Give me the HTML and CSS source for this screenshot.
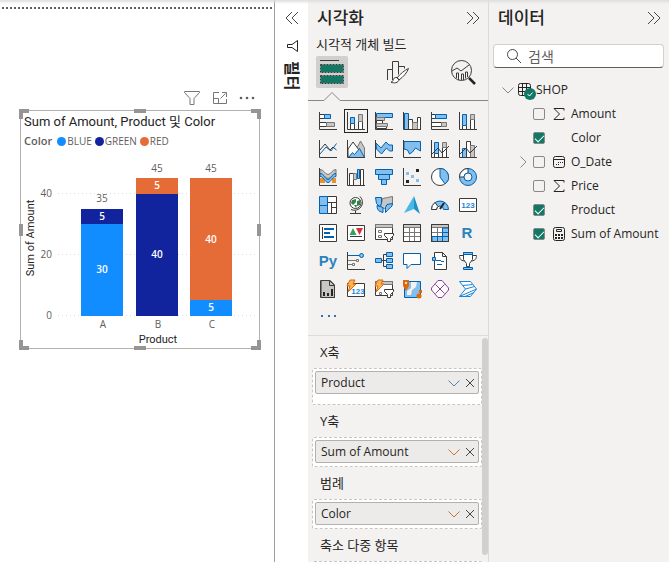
FILE: index.html
```html
<!DOCTYPE html>
<html lang="ko">
<head>
    <meta charset="UTF-8">
    <meta name="viewport" content="width=device-width, initial-scale=1.0">
    <title>시각화</title>
    <link rel="stylesheet" href="styles.css">
</head>
<body>
    <!-- Report canvas -->
    <main class="canvas">
        <div class="page-edge"></div>
        <section class="visual">
            <div class="visual-tools">
                <button aria-label="필터"><svg width="18" height="16" viewBox="0 0 18 16"><path d="M1.500 1.500h15v1L11 8.500v6H7v-6L1.500 2.500z"/></svg></button>
                <button aria-label="포커스 모드"><svg width="16" height="14" viewBox="0 0 16 14"><path d="M7 1.500H1.500v11h13V8M1.500 7.500h5v5M8.500 7.500l5-5M10 1.500h4.500V6"/></svg></button>
                <button aria-label="추가 옵션"><svg width="16" height="4" viewBox="0 0 16 4"><g class="dots"><circle cx="2" cy="2" r="1.300"/><circle cx="8" cy="2" r="1.300"/><circle cx="14" cy="2" r="1.300"/></g></svg></button>
            </div>
            <div class="frame">
                <h3>Sum of Amount, Product 및 Color</h3>
                <div class="legend">
                    <b>Color</b>
                    <span class="key blue">BLUE</span>
                    <span class="key green">GREEN</span>
                    <span class="key red">RED</span>
                </div>
                <svg class="chart" viewBox="0 0 238 197">
                    <path class="grid-line" d="M37 42.500h198M37 103.500h198M37 164.500h198"/>
                    <g class="bar-blue">
                        <rect x="60" y="73" width="42" height="92"/>
                        <rect x="169" y="149" width="42" height="16"/>
                    </g>
                    <g class="bar-green">
                        <rect x="60" y="58" width="42" height="15"/>
                        <rect x="115" y="43" width="42" height="122"/>
                    </g>
                    <g class="bar-red">
                        <rect x="115" y="27" width="42" height="16"/>
                        <rect x="169" y="27" width="42" height="122"/>
                    </g>
                    <g class="tick end">
                        <text x="31" y="46">40</text>
                        <text x="31" y="107">20</text>
                        <text x="31" y="168">0</text>
                    </g>
                    <g class="tick">
                        <text x="81" y="51">35</text>
                        <text x="136" y="21">45</text>
                        <text x="190" y="21">45</text>
                        <text x="82" y="177">A</text>
                        <text x="137" y="177">B</text>
                        <text x="191" y="177">C</text>
                    </g>
                    <g class="value">
                        <text x="81" y="69">5</text>
                        <text x="81" y="122">30</text>
                        <text x="136" y="38">5</text>
                        <text x="136" y="107">40</text>
                        <text x="190" y="92">40</text>
                        <text x="190" y="160">5</text>
                    </g>
                    <g class="axis-title">
                        <text x="137" y="192">Product</text>
                        <text x="-87" y="13" transform="rotate(-90)">Sum of Amount</text>
                    </g>
                </svg>
                <i class="handle tl"></i><i class="handle tc"></i><i class="handle tr"></i>
                <i class="handle ml"></i><i class="handle mr"></i>
                <i class="handle bl-corner"></i><i class="handle bc"></i><i class="handle br"></i>
            </div>
        </section>
    </main>

    <!-- Collapsed filter pane -->
    <aside class="filters">
        <button aria-label="확장"><svg width="14" height="14" viewBox="0 0 14 14"><path d="M7 1L1 7l6 6M13 1L7 7l6 6"/></svg></button>
        <svg class="funnel" width="12" height="12" viewBox="0 0 12 12"><path d="M11.500.5v11L6 7.500H1.500v-3H6z"/></svg>
        <h2>필터</h2>
    </aside>

    <!-- Visualizations pane -->
    <aside class="pane build">
        <header>
            <h2>시각화</h2>
            <button aria-label="축소"><svg width="14" height="14" viewBox="0 0 14 14"><path d="M1 1l6 6-6 6M7 1l6 6-6 6"/></svg></button>
        </header>
        <h3>시각적 개체 빌드</h3>
        <nav class="tabs">
            <button class="on" aria-label="빌드"><svg width="24" height="24" viewBox="0 0 24 24"><path class="k" d="M0 .5h19"/><path class="n" fill="#117865" d="M1 5h22v7H1zM1 16h22v7H1z"/><path class="k" stroke-dasharray="2 1" d="M.5 4.500h23v8H.5zM.5 15.500h23v8H.5z"/></svg></button>
            <button aria-label="서식"><svg width="24" height="24" viewBox="0 0 24 24"><path class="k" d="M1.500 20V9.500h5V20M6.500 9.500v-8h6v13M12.500 6.500h6v2"/><path class="w" d="M22.500 8.500C19 10 14 14 11 18l2 2c4-3 8-7 9.500-11.500zM11 17.500c-3-.5-3.500 1.500-4 3-.3 1-1 1.500-2 1.700 3 1.300 7.500.8 8-2.700z"/></svg></button>
            <button aria-label="분석"><svg width="24" height="24" viewBox="0 0 24 24"><circle class="k" cx="10.500" cy="10.500" r="10"/><path stroke="#252423" stroke-width="2.500" d="M18 18l6 6"/><path class="k" d="M1 11l5-3 4 3 8-6M5.500 18v-5h2v7M10.500 20v-6h2v6M14.500 18.500V12h2v5"/></svg></button>
        </nav>
        <svg class="notch" viewBox="0 0 180 10" preserveAspectRatio="xMinYMin slice"><path d="M0 9.500h16l8-8 8 8H400"/></svg>

        <div class="gallery">
            <button aria-label="누적 가로 막대형"><svg viewBox="0 0 18 18"><path class="k" d="M.5 0v17.500H18"/><path class="w" d="M.5 2.500h5v4h-5zM.5 10.500h7v4h-7z"/><path class="b" d="M5.500 2.500h6v4h-6z"/><path class="g" d="M7.500 10.500h8v4h-8z"/></svg></button>
            <button class="on" aria-label="누적 세로 막대형"><svg viewBox="0 0 18 18"><path class="k" d="M.5 0v17.500H18"/><path class="w" d="M3.500 11.500h4v6h-4zM11.500 9.500h4v8h-4z"/><path class="b" d="M3.500 5.500h4v6h-4z"/><path class="g" d="M11.500 2.500h4v7h-4z"/></svg></button>
            <button aria-label="묶은 가로 막대형"><svg viewBox="0 0 18 18"><path class="b" d="M1.500 1.500h16v4h-16z"/><path class="g" d="M1.500 5.500h8v3h-8z"/><path class="w" d="M1.500 8.500h6v3h-6zM1.500 14.500h10v2h-10z"/><path class="g" d="M1.500 11.500h11v3h-11z"/><path class="k" d="M.5 0v17.500H18"/></svg></button>
            <button aria-label="묶은 세로 막대형"><svg viewBox="0 0 18 18"><path class="b" d="M1.500 1.500h4v16h-4z"/><path class="w" d="M5.500 7.500h4v10h-4zM14.500 5.500h3v12h-3z"/><path class="g" d="M9.500 10.500h5v7h-5z"/><path class="k" d="M.5 0v17.500H18"/></svg></button>
            <button aria-label="100% 가로 막대형"><svg viewBox="0 0 18 18"><path class="k" d="M.5 0v17.500H18"/><path class="w" d="M.5 2.500h4v4h-4zM.5 10.500h10v4H.5z"/><path class="b" d="M4.500 2.500h11v4h-11z"/><path class="g" d="M10.500 10.500h5v4h-5z"/></svg></button>
            <button aria-label="100% 세로 막대형"><svg viewBox="0 0 18 18"><path class="k" d="M.5 0v17.500H18"/><path class="w" d="M3.500 13.500h4v4h-4zM11.500 7.500h4v10h-4z"/><path class="b" d="M3.500 2.500h4v11h-4z"/><path class="g" d="M11.500 2.500h4v5h-4z"/></svg></button>

            <button aria-label="꺾은선형"><svg viewBox="0 0 18 18"><path class="k" d="M.5 0v17.500H18"/><path class="bl" d="M1 14l6-7 5 4 5.500-7.500"/><path class="k" d="M1 10l5-6 5 6 3-3 3.500 3"/></svg></button>
            <button aria-label="영역형"><svg viewBox="0 0 18 18"><path class="g" d="M9 10l4.500-9 4 7v9z"/><path class="w" d="M1 9l5-7 6 8-5 7H1z"/><path class="b" d="M1.500 17.500l4-5 2 2 5-6 5 9z"/><path class="k" d="M.5 0v17.500H18"/></svg></button>
            <button aria-label="누적 영역형"><svg viewBox="0 0 18 18"><path class="b" d="M1 3l5 5 5-6 3 3h3.500v6h-3l-3-3-5 6-5-5z"/><path class="k" d="M.5 0v17.500H18"/></svg></button>
            <button aria-label="100% 누적 영역형"><svg viewBox="0 0 18 18"><path class="b" d="M1 1.500h16.500V11l-5-3-3 4-3 2-2-4L1 9z"/><path class="k" d="M.5 0v17.500H18"/></svg></button>
            <button aria-label="꺾은선형 및 누적 막대형"><svg viewBox="0 0 18 18"><path class="w" d="M3.500 13.500h4v4h-4zM11.500 7.500h4v10h-4z"/><path class="b" d="M3.500 2.500h4v11h-4z"/><path class="g" d="M11.500 2.500h4v5h-4z"/><path class="k" d="M.5 0v17.500H18M1 14l6-6 4 5 7-7"/></svg></button>
            <button aria-label="꺾은선형 및 묶은 막대형"><svg viewBox="0 0 18 18"><path class="b" d="M3.500 8.500h4v9h-4z"/><path class="w" d="M7.500 1.500h4v16h-4z"/><path class="g" d="M11.500 5.500h4v12h-4z"/><path class="k" d="M.5 0v17.500H18M1 14l6-6 4 5 7-7"/></svg></button>

            <button aria-label="리본"><svg viewBox="0 0 18 18"><path class="n" fill="#e8912d" d="M1 10h5v5H1zM13 10h4v5h-4z"/><path class="g" d="M1 1.500c4 0 5 5 8 5s4-5 8-5v4c-4 0-5 5-8 5s-4-5-8-5z"/><path class="b" d="M1 5.500c4 0 5 6 8 6s4-6 8-6v3c-4 0-5 6-8 6s-4-6-8-6z"/><path class="k" d="M.5 0v17.500H18"/></svg></button>
            <button aria-label="폭포"><svg viewBox="0 0 18 18"><path class="w" d="M2.500 5.500h4v12h-4zM13.500 1.500h3v16h-3z"/><path class="g" d="M6.500 5.500h3v6h-3z"/><path class="b" d="M10.500 1.500h2v9h-2z"/><path class="k" d="M.5 0v17.500H18"/></svg></button>
            <button aria-label="깔때기"><svg viewBox="0 0 18 18"><path class="b" d="M.5 1.500h17v5H.5zM3.500 6.500h11v5h-11zM6.500 11.500h5v5h-5z"/></svg></button>
            <button aria-label="분산형"><svg viewBox="0 0 18 18"><path class="k" d="M.5 0v17.500H18"/><path class="n" fill="#252423" d="M13 1h3v3h-3zM3 12h3v3H3z"/><path class="n" fill="#83beec" d="M3 4h3v3H3zM8 7h3v3H8zM13 11h3v3h-3z"/></svg></button>
            <button aria-label="원형"><svg viewBox="0 0 18 18"><circle class="w" cx="9" cy="9" r="8.500"/><path class="b" d="M9 .5a8.500 8.500 0 0 1 5 15.400L9 9z"/></svg></button>
            <button aria-label="도넛형"><svg viewBox="0 0 18 18"><circle class="b" cx="9" cy="9" r="8.500"/><path class="w" d="M9 .5A8.500 8.500 0 0 0 .5 9H5a4 4 0 0 1 4-4z"/><circle class="bl" cx="9" cy="9" r="4" fill="#f3f2f1"/></svg></button>

            <button aria-label="트리맵"><svg viewBox="0 0 18 18"><path class="w" d="M8.500.5h9v17h-9zM8.500 6.500h9M12.500 6.500v11M12.500 11.500h5"/><path class="b" d="M.5.5h8v17h-8zM.5 9.500h8"/></svg></button>
            <button aria-label="지도"><svg viewBox="0 0 18 18"><circle class="w" cx="8.500" cy="7" r="5.500"/><path class="n" fill="#31834c" d="M5 4l4-1 0 3-3 3-2-2zM10 5l3-1v5l-3 1zM7 9l3 0-1 3z"/><path class="k" d="M13 .5a8 8 0 0 1-9 13M8.500 15v2.500M3 17.500h11"/></svg></button>
            <button aria-label="등치 지역도"><svg viewBox="0 0 18 18"><path class="g" d="M7.500 2.500l5-1 5-1v8l-5 1-3 3-4-1 1-4z"/><path class="b" d="M.5 1.500h6v6l-2 3-3-3zM12 8.500l5.500-1c0 4-3 4-5 7l-2 2v-5zM2 9.500l6 2v5l-3-1c-2-1-3-3-3-6z"/></svg></button>
            <button aria-label="Azure 지도"><svg viewBox="0 0 18 18"><path class="n" fill="#48b8e8" d="M11 0L1 17l10-4z"/><path class="n" fill="#1f8fc4" d="M11 0l6 18-6-5z"/></svg></button>
            <button aria-label="계기"><svg viewBox="0 0 18 18"><path class="b" d="M.5 13.500a8.500 8.500 0 0 1 17 0h-5a3.500 3.500 0 0 0-7 0z"/><path class="w" d="M.5 13.500A8.500 8.500 0 0 1 4 6.500l3 4a4 4 0 0 0-1.500 3z"/><path stroke="#252423" stroke-width="2" d="M9 13l4-6"/></svg></button>
            <button aria-label="카드"><svg viewBox="0 0 18 18"><path class="w" d="M.5 2.500h17v13H.5z"/><text class="num" x="9" y="12">123</text></svg></button>

            <button aria-label="여러 행 카드"><svg viewBox="0 0 18 18"><path class="w" d="M.5.5h17v17H.5z"/><path class="k" d="M3.500 3v12"/><path stroke="#0063b1" stroke-width="2" d="M5 5h10M5 9h6M5 13h10"/></svg></button>
            <button aria-label="KPI"><svg viewBox="0 0 18 18"><path class="w" d="M.5 1.500h17v15H.5z"/><path class="k" d="M3 12.500h12"/><path class="n" fill="#31a354" d="M6 4l3.500 7h-7z"/><path class="n" fill="#d13438" d="M12.500 11L9 4h7z"/></svg></button>
            <button aria-label="슬라이서"><svg viewBox="0 0 18 18"><path class="w" d="M.5.5h17v15H.5z"/><path class="g" d="M.5.5h17v3H.5z"/><path class="gl" d="M3.500 6.500h3v2h-3zM3.500 11.500h3v2h-3z"/><path class="w" d="M9.500 9.500h9v2l-3 3v3h-3v-3l-3-3z"/></svg></button>
            <button aria-label="테이블"><svg viewBox="0 0 18 18"><path class="w" d="M.5.5h17v17H.5z"/><path class="g" d="M.5.5h17v3H.5z"/><path class="gl" d="M1 8.500h16M1 12.500h16M6.500 4v13M11.500 4v13"/><path class="k" d="M.5.5h17v17H.5z"/></svg></button>
            <button aria-label="행렬"><svg viewBox="0 0 18 18"><path class="w" d="M.5.5h17v17H.5z"/><path class="g" d="M.5.5h17v3H.5z"/><path class="gl" d="M1 8.500h16M6.500 4v13"/><path class="b" d="M11.500 4h6v13.500H1v-5h10.500zM11.500 12.500h6M6.500 12.500v5M11.500 8.500h6M11.500 12v5"/><path class="k" d="M.5.5h17v17H.5z"/></svg></button>
            <button aria-label="R 스크립트"><svg viewBox="0 0 18 18"><text class="script" x="8" y="14">R</text></svg></button>

            <button aria-label="Python"><svg viewBox="0 0 18 18"><text class="script" x="9" y="14">Py</text></svg></button>
            <button aria-label="주요 영향 요인"><svg viewBox="0 0 18 18"><path class="k" d="M.5 0v17.500H18"/><path class="bl" d="M1 3.500h11"/><path class="gl" d="M1 8.500h8M1 12.500h4M9.500 7.500h2v2h-2zM5.500 11.500h2v2h-2z"/><circle class="b" cx="14.500" cy="3.500" r="2"/></svg></button>
            <button aria-label="분해 트리"><svg viewBox="0 0 18 18"><path class="k" d="M6 8.500h6M8.500 2.500v12M8.500 2.500H12M8.500 14.500H12"/><path class="b" d="M.5 6.500h6v4h-6zM11.500.5h6v4h-6zM11.500 6.500h6v4h-6zM11.500 12.500h6v4h-6z"/></svg></button>
            <button aria-label="질문 및 답변"><svg viewBox="0 0 18 18"><path fill="#fff" stroke="#0063b1" d="M.5 1.500h17v11H8l-4 4v-4H.5z"/></svg></button>
            <button aria-label="설명"><svg viewBox="0 0 18 18"><path class="w" d="M3.500.5h8l4 4v13h-12zM11.500.5v4h4"/><path class="bl" d="M5 8.500h5M10 9.500h3M6 12.500h5"/><path class="b" d="M1.500 5.500h3v3h-3z"/></svg></button>
            <button aria-label="목표"><svg viewBox="0 0 18 18"><path class="w" d="M4.500.5h9v7l-3 4v3h-3v-3l-3-4zM4.500 3.500h-4c0 3 1 5 5 5.500M13.500 3.500h4c0 3-1 5-5 5.500"/><path class="b" d="M4.500.5h9v2h-9zM4.500 15.500h9v2h-9z"/></svg></button>

            <button aria-label="페이지를 매긴 보고서"><svg viewBox="0 0 18 18"><path class="g" d="M2.500.5h9l4 4v13h-13z"/><path class="k" d="M1.500.5h9l5 5v12h-14zM10.500.5v5h5"/><path stroke="#252423" stroke-width="2" d="M5 16v-4M9 16v-3M13 16V9"/></svg></button>
            <button aria-label="카드(신규)"><svg viewBox="0 0 18 18"><path class="w" d="M.5 3.500h17v13H.5z"/><text class="num" x="11" y="14">123</text><path class="bolt" d="M3 0h5L6 4h3l-8 8 2-6H0z"/></svg></button>
            <button aria-label="슬라이서(신규)"><svg viewBox="0 0 18 18"><path class="w" d="M.5 1.500h17v14H.5z"/><path class="g" d="M.5 1.500h17v3H.5z"/><path class="gl" d="M4.500 12.500h2v2h-2z"/><path class="w" d="M9.500 9.500h9v2l-3 3v3h-3v-3l-3-3z"/><path class="bolt" d="M3 0h5L6 4h3l-8 8 2-6H0z"/></svg></button>
            <button aria-label="ArcGIS"><svg viewBox="0 0 18 18"><path class="b" d="M1.500 1.500h16v16h-16z"/><path class="n" fill="#f3f2f1" d="M8 2h6l-1 5-4 3-1 5H4v-4l4-3z"/><path class="n" fill="#d96b0c" d="M0 0h6v6l-3 5-3-5zM16 10h3v3h-3z"/><circle class="n" cx="16" cy="16" r="2.500" fill="#d96b0c"/><circle class="n" cx="3" cy="3" r="1" fill="#fff"/></svg></button>
            <button aria-label="Power Apps"><svg viewBox="0 0 18 18"><path fill="#fff" stroke="#8c3b9c" d="M7 .5h4L17.500 8v2L11 17.500H7L.5 10V8zM4.500 4.500l9 9M13.500 4.500l-9 9M9 9"/></svg></button>
            <button aria-label="Power Automate"><svg viewBox="0 0 18 18"><path fill="#fff" stroke="#1a86d9" d="M.5 1.500h11L17.500 9l-6 7.500H.5L6.500 9zM4 5.500l9.500-1M6.500 9l9-2.500M.5 16.500L17.500 9M6 16.500l9-4"/></svg></button>

            <button class="more" aria-label="시각적 개체 더 보기"><svg viewBox="0 0 18 18"><path d="M2 7h2v2H2zM9 7h2v2H9zM15 7h2v2h-2z"/></svg></button>
        </div>

        <!-- Field wells -->
        <div class="wells">
            <h4>X축</h4>
            <div class="well tall">
                <div class="pill">Product
                    <button aria-label="메뉴"><svg width="12" height="12" viewBox="0 0 12 12"><path class="cool" d="M.5 3.500L6 9l5.500-5.500"/></svg></button>
                    <button aria-label="제거"><svg width="10" height="12" viewBox="0 0 10 12"><path d="M1 2l8 8M9 2l-8 8"/></svg></button>
                </div>
            </div>
            <h4>Y축</h4>
            <div class="well">
                <div class="pill">Sum of Amount
                    <button aria-label="메뉴"><svg width="12" height="12" viewBox="0 0 12 12"><path class="warm" d="M.5 3.500L6 9l5.500-5.500"/></svg></button>
                    <button aria-label="제거"><svg width="10" height="12" viewBox="0 0 10 12"><path d="M1 2l8 8M9 2l-8 8"/></svg></button>
                </div>
            </div>
            <h4>범례</h4>
            <div class="well">
                <div class="pill">Color
                    <button aria-label="메뉴"><svg width="12" height="12" viewBox="0 0 12 12"><path class="warm" d="M.5 3.500L6 9l5.500-5.500"/></svg></button>
                    <button aria-label="제거"><svg width="10" height="12" viewBox="0 0 10 12"><path d="M1 2l8 8M9 2l-8 8"/></svg></button>
                </div>
            </div>
            <h4>축소 다중 항목</h4>
            <div class="well"></div>
            <i class="scrollbar"></i>
        </div>
    </aside>

    <!-- Data pane -->
    <aside class="pane data">
        <header>
            <h2>데이터</h2>
            <button aria-label="축소"><svg width="14" height="14" viewBox="0 0 14 14"><path d="M1 1l6 6-6 6M7 1l6 6-6 6"/></svg></button>
        </header>
        <label class="search">
            <svg width="16" height="16" viewBox="0 0 16 16"><circle cx="6.500" cy="6.500" r="5"/><path d="M10 10l5 5"/></svg>
            <input type="text" placeholder="검색" aria-label="검색">
        </label>
        <div class="table-row">
            <button aria-label="접기"><svg width="12" height="12" viewBox="0 0 12 12"><path d="M.5 3.500L6 9l5.500-5.500"/></svg></button>
            <span class="table-icon">
                <svg width="14" height="14" viewBox="0 0 14 14"><rect x=".5" y=".5" width="12" height="12" rx="2"/><path d="M.5 4.500h12M.5 8.500h12M4.500.5v12M8.500.5v12"/></svg>
                <svg class="badge" width="12" height="12" viewBox="0 0 12 12"><circle cx="6" cy="6" r="6"/><path d="M3.500 6l2 2 3-3.500"/></svg>
            </span>
            SHOP
        </div>
        <ul class="fields">
            <li>
                <input type="checkbox" id="f-amount">
                <svg viewBox="0 0 12 14"><path d="M11 3.500v-2H1L6.500 7 1 12.500h10v-2"/></svg>
                <label for="f-amount">Amount</label>
            </li>
            <li>
                <input type="checkbox" id="f-color" checked>
                <svg viewBox="0 0 12 14"></svg>
                <label for="f-color">Color</label>
            </li>
            <li>
                <button aria-label="펼치기"><svg viewBox="0 0 12 12"><path d="M3.500.5L9 6l-5.500 5.500"/></svg></button>
                <input type="checkbox" id="f-date">
                <svg viewBox="0 0 12 14"><rect x=".5" y="1.500" width="11" height="11" rx="2"/><path d="M.5 4.500h11"/><path stroke-dasharray="1 1" d="M5 7.500h5M3 9.500h4"/></svg>
                <label for="f-date">O_Date</label>
            </li>
            <li>
                <input type="checkbox" id="f-price">
                <svg viewBox="0 0 12 14"><path d="M11 3.500v-2H1L6.500 7 1 12.500h10v-2"/></svg>
                <label for="f-price">Price</label>
            </li>
            <li>
                <input type="checkbox" id="f-product" checked>
                <svg viewBox="0 0 12 14"></svg>
                <label for="f-product">Product</label>
            </li>
            <li>
                <input type="checkbox" id="f-sum" checked>
                <svg viewBox="0 0 12 14"><rect x=".5" y=".5" width="11" height="13" rx="2"/><path d="M3.500 2.500h5v2h-5z"/><path stroke-width="2" stroke-dasharray="2 1" d="M2 8h8M2 11h8"/></svg>
                <label for="f-sum">Sum of Amount</label>
            </li>
        </ul>
    </aside>
</body>
</html>
```
FILE: styles.css
```css
* {
    box-sizing: border-box;
    margin: 0;
    padding: 0;
}

body {
    display: flex;
    height: 100vh;
    overflow: hidden;
    background: #fff;
    color: #252423;
    font-family: "Open Sans", "Noto Sans CJK KR", sans-serif;
    font-size: 12px;
    line-height: 16px;
}

body::before {
    content: "";
    position: absolute;
    width: 100%;
    height: 4px;
    background: linear-gradient(#dedede, transparent);
}

button {
    display: flex;
    align-items: center;
    justify-content: center;
    border: none;
    background: none;
    cursor: pointer;
}

svg {
    display: block;
    flex: none;
    fill: none;
    stroke: #484644;
    overflow: visible;
}

/* Canvas */
.canvas {
    flex: 1;
    min-width: 0;
    padding-top: 7px;
}

.page-edge {
    height: 2px;
    margin: 0 1px 0 2px;
    background: repeating-linear-gradient(90deg, #605e5c 0 2px, transparent 2px 4px);
}

.visual {
    margin: 80px 14px 0 20px;
}

.visual-tools {
    display: flex;
    align-items: center;
    justify-content: flex-end;
    gap: 11px;
    height: 21px;
    padding: 0 5px 3px 0;
}

.visual-tools svg {
    stroke: #797775;
}

.visual-tools .dots {
    fill: #605e5c;
    stroke: none;
}

.frame {
    position: relative;
    border: 1px solid #b3b0ad;
}

.frame h3 {
    padding: 2px 0 0 3px;
    font: 13px/18px Roboto, "Noto Sans CJK KR", sans-serif;
    white-space: nowrap;
}

.legend {
    display: flex;
    gap: 3px;
    height: 20px;
    padding-left: 3px;
    color: #605e5c;
    font-size: 11px;
    line-height: 20px;
}

.legend b {
    margin-right: 2px;
    font-weight: 600;
}

.key {
    display: flex;
    align-items: center;
    gap: 1px;
    font-size: 10px;
}

.key::before {
    content: "";
    width: 9px;
    height: 9px;
    border-radius: 50%;
    background: currentColor;
}

.key.blue::before { background: #118dff; }
.key.green::before { background: #12239e; }
.key.red::before { background: #e66c37; }

.chart {
    width: 100%;
    stroke: none;
    text-anchor: middle;
    font-size: 10px;
}

.grid-line {
    stroke: #dddbd9;
    stroke-dasharray: 1 3;
}

.bar-blue { fill: #118dff; }
.bar-green { fill: #12239e; }
.bar-red { fill: #e66c37; }
.tick { fill: #605e5c; }
.tick.end { text-anchor: end; }
.value { fill: #fff; font-weight: 600; }

.axis-title {
    fill: #252423;
    font-family: Roboto, sans-serif;
    font-size: 11px;
}

.handle {
    position: absolute;
    border: 0 solid #979593;
}

.tl, .tr, .bl-corner, .br { width: 10px; height: 10px; }
.tl, .tc, .tr { top: -2px; }
.bl-corner, .bc, .br { bottom: -2px; }
.tl, .ml, .bl-corner { left: -2px; }
.tr, .mr, .br { right: -2px; }
.tl { border-width: 4px 0 0 4px; }
.tr { border-width: 4px 4px 0 0; }
.bl-corner { border-width: 0 0 4px 4px; }
.br { border-width: 0 4px 4px 0; }

.tc, .bc {
    left: calc(50% - 6px);
    width: 12px;
    border-width: 4px 0 0;
}

.ml, .mr {
    top: calc(50% - 6px);
    height: 12px;
    border-width: 0 0 0 4px;
}

/* Filters */
.filters {
    display: flex;
    flex-direction: column;
    align-items: center;
    width: 34px;
    padding-top: 11px;
    border-left: 1px solid #a19f9d;
}

.filters .funnel {
    margin: 15px 0 9px;
    stroke: #252423;
}

.filters h2 {
    font-size: 16px;
    line-height: 20px;
    writing-mode: vertical-rl;
    text-orientation: sideways;
}

/* Side panes */
.pane {
    display: flex;
    flex-direction: column;
    width: 181px;
    background: #f3f2f1;
}

.pane header {
    display: flex;
    align-items: center;
    justify-content: space-between;
    height: 36px;
    padding: 0 8px 0 9px;
}

.pane h2 {
    font-size: 17px;
    font-weight: 500;
    line-height: 24px;
}

.build {
    width: 180px;
}

.build h3 {
    padding-left: 8px;
    font-size: 13px;
    font-weight: 400;
    line-height: 16px;
}

.tabs {
    display: flex;
    justify-content: space-between;
    padding: 4px 9px 0 8px;
}

.tabs button {
    width: 32px;
    height: 32px;
    border-radius: 2px;
}

.tabs .on {
    background: #d2d0ce;
}

.notch {
    width: 100%;
    height: 10px;
    margin: 3px 0 8px;
    overflow: hidden;
    stroke: #8a8886;
}

.gallery {
    display: grid;
    grid-template-columns: repeat(6, 24px);
    grid-auto-rows: 24px;
    gap: 4px;
    padding: 0 8px 6px;
    border-bottom: 1px solid #dddbd9;
}

.gallery svg {
    width: 18px;
    height: 18px;
}

.gallery .on {
    border: 1px solid #252423;
}

/* Icon paints */
.k { fill: none; stroke: #3b3a39; }
.w { fill: #fff; stroke: #3b3a39; }
.b { fill: #83beec; stroke: #0063b1; }
.bl { stroke: #0063b1; }
.g { fill: #c8c6c4; stroke: #797775; }
.gl { stroke: #797775; }
.n { stroke: none; }
.bolt { fill: #ffb353; stroke: #d96b0c; }

.num {
    fill: #1a86d9;
    stroke: none;
    font-size: 8px;
    font-weight: 600;
    text-anchor: middle;
}

.script {
    fill: #2b83ba;
    stroke: none;
    font-size: 15px;
    font-weight: 700;
    text-anchor: middle;
}

.more svg {
    fill: #3b6ea5;
    stroke: none;
}

/* Wells */
.wells {
    flex: 1;
    position: relative;
    min-height: 0;
    padding: 0 6px 0 4px;
    overflow: hidden;
}

.wells h4 {
    padding-left: 8px;
    font-size: 13px;
    font-weight: 400;
    line-height: 32px;
}

.well {
    min-height: 30px;
    padding: 2px;
    border: 1px dashed #c8c6c4;
    border-radius: 2px;
    background: #fff;
}

.well.tall {
    min-height: 37px;
}

.pill {
    display: flex;
    align-items: center;
    gap: 5px;
    height: 23px;
    padding: 0 3px 0 5px;
    border: 1px solid #b3b0ad;
    border-radius: 2px;
    background: #edebe9;
}

.pill button:first-of-type {
    margin-left: auto;
}

.cool { stroke: #4a86b8; }
.warm { stroke: #c07438; }

.scrollbar {
    position: absolute;
    top: 2px;
    right: 0;
    bottom: 7px;
    width: 6px;
    border-radius: 3px;
    background: #d2d0ce;
}

/* Data */
.data {
    border-left: 1px solid #dddbd9;
}

.search {
    display: flex;
    align-items: center;
    gap: 6px;
    height: 24px;
    margin: 8px 5px 10px 4px;
    padding: 0 12px;
    border: 1px solid #d2d0ce;
    border-bottom-color: #605e5c;
    border-radius: 4px;
    background: #fff;
}

.search input {
    width: 100%;
    min-width: 0;
    border: none;
    outline: none;
    font: 14px/20px "Noto Sans CJK KR", sans-serif;
}

.search input::placeholder {
    color: #605e5c;
}

.table-row, .fields li {
    display: flex;
    align-items: center;
    height: 24px;
    white-space: nowrap;
}

.table-row {
    gap: 4px;
    padding-left: 13px;
}

.table-row button svg, .fields button svg {
    stroke: #8a8886;
}

.table-icon {
    position: relative;
}

.table-icon svg {
    stroke: #252423;
}

.table-icon .badge {
    position: absolute;
    left: 6px;
    top: 5px;
    fill: #117865;
    stroke: none;
}

.badge path {
    fill: none;
    stroke: #fff;
}

.fields {
    list-style: none;
}

.fields li {
    gap: 8px;
    padding-left: 44px;
}

.fields li:has(button) {
    padding-left: 28px;
}

.fields button {
    margin-right: -4px;
}

.fields button svg {
    width: 12px;
    height: 12px;
}

.fields li > svg {
    width: 12px;
    height: 14px;
    margin-right: -2px;
    stroke: #252423;
}

.fields input {
    appearance: none;
    width: 12px;
    height: 12px;
    border: 1px solid #8a8886;
    border-radius: 2px;
    background: #f3f2f1;
}

.fields input:checked {
    background: #117865;
}

.fields input:checked::before {
    content: "";
    display: block;
    width: 8px;
    height: 4px;
    margin: 2px 1px;
    border: solid #fff;
    border-width: 0 0 1px 1px;
    transform: rotate(-45deg);
}
```
